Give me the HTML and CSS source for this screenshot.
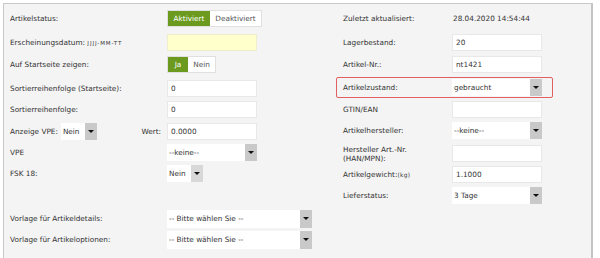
FILE: index.html
```html
<!DOCTYPE html>
<html lang="de">
<head>
    <meta charset="UTF-8">
    <title>Artikel bearbeiten</title>
    <link rel="stylesheet" href="styles.css">
</head>
<body>

<div class="panel">
    <div class="col-left">
        <div class="row">
            <span class="label">Artikelstatus:</span>
            <div class="toggle">
                <span class="tg on w42">Aktiviert</span><span class="tg w52">Deaktiviert</span>
            </div>
        </div>
        <div class="row mt7">
            <span class="label">Erscheinungsdatum: <small class="hint">JJJJ-MM-TT</small></span>
            <input type="text" class="field date" value="">
        </div>
        <div class="row mt5">
            <span class="label">Auf Startseite zeigen:</span>
            <div class="toggle">
                <span class="tg on w20">Ja</span><span class="tg w28">Nein</span>
            </div>
        </div>
        <div class="row mt7">
            <span class="label">Sortierreihenfolge (Startseite):</span>
            <input type="text" class="field" value="0">
        </div>
        <div class="row">
            <span class="label">Sortierreihenfolge:</span>
            <input type="text" class="field" value="0">
        </div>
        <div class="row mt5">
            <span class="label vpe">
                Anzeige VPE:
                <span class="select small"><span class="val">Nein</span><span class="arrow"></span></span>
                <span class="wert">Wert:</span>
            </span>
            <input type="text" class="field" value="0.0000">
        </div>
        <div class="row">
            <span class="label">VPE</span>
            <span class="select"><span class="val">--keine--</span><span class="arrow"></span></span>
        </div>
        <div class="row">
            <span class="label">FSK 18:</span>
            <span class="select small light"><span class="val">Nein</span><span class="arrow"></span></span>
        </div>
        <div class="row mt28">
            <span class="label">Vorlage für Artikeldetails:</span>
            <span class="select wide"><span class="val">-- Bitte wählen Sie --</span><span class="arrow"></span></span>
        </div>
        <div class="row">
            <span class="label">Vorlage für Artikeloptionen:</span>
            <span class="select wide"><span class="val">-- Bitte wählen Sie --</span><span class="arrow"></span></span>
        </div>
    </div>

    <div class="col-right">
        <div class="row">
            <span class="label">Zuletzt aktualisiert:</span>
            <span class="value">28.04.2020 14:54:44</span>
        </div>
        <div class="row mt7">
            <span class="label">Lagerbestand:</span>
            <input type="text" class="field" value="20">
        </div>
        <div class="row mt5">
            <span class="label">Artikel-Nr.:</span>
            <input type="text" class="field" value="nt1421">
        </div>
        <div class="row marked">
            <span class="label">Artikelzustand:</span>
            <span class="select"><span class="val">gebraucht</span><span class="arrow"></span></span>
        </div>
        <div class="row mt3">
            <span class="label">GTIN/EAN</span>
            <input type="text" class="field" value="">
        </div>
        <div class="row">
            <span class="label">Artikelhersteller:</span>
            <span class="select"><span class="val">--keine--</span><span class="arrow"></span></span>
        </div>
        <div class="row mt6">
            <span class="label two">Hersteller Art.-Nr.<br>(HAN/MPN):</span>
            <input type="text" class="field" value="">
        </div>
        <div class="row">
            <span class="label">Artikelgewicht:<small class="unit">(kg)</small></span>
            <input type="text" class="field" value="1.1000">
        </div>
        <div class="row">
            <span class="label">Lieferstatus:</span>
            <span class="select"><span class="val">3 Tage</span><span class="arrow"></span></span>
        </div>
    </div>
</div>

</body>
</html>
```

FILE: styles.css
```css
body {
    margin: 0;
    background-color: #fff;
    font-family: "DejaVu Sans", Verdana, sans-serif;
    font-size: 7.3px;
    color: #333;
}
.panel {
    display: flex;
    margin: 3px 0 0 3px;
    width: 590px;
    height: 260px;
    padding: 6px 0 0 6px;
    box-sizing: border-box;
    background-color: #f4f4f4;
    border: 1px solid #c8c8c8;
    border-right: 2px solid #c4c4c4;
    border-bottom: none;
}
.col-left {
    width: 326px;
}
.col-right {
    width: 217px;
}
.row {
    display: flex;
    align-items: center;
    height: 17px;
    margin-top: 4px;
}
.row:first-child {
    margin-top: 0;
}
.mt3 { margin-top: 3px; }
.mt5 { margin-top: 5px; }
.mt6 { margin-top: 6px; }
.mt7 { margin-top: 7px; }
.mt28 { margin-top: 28px; }

.col-left .label {
    width: 157px;
    flex-shrink: 0;
}
.col-right .row {
    padding-left: 7px;
}
.col-right .label {
    width: 109px;
    flex-shrink: 0;
}
.label.two {
    line-height: 9px;
}
.hint {
    font-size: 5.5px;
    letter-spacing: 0.9px;
}
.unit {
    font-size: 5.8px;
    letter-spacing: 0.3px;
}
.value {
    padding-left: 1px;
}
.vpe {
    display: flex;
    align-items: center;
    gap: 3px;
    padding-right: 6px;
    box-sizing: border-box;
}
.wert {
    margin-left: auto;
}

.row.marked {
    height: 17px;
    margin-top: 4px;
    padding: 1px 10px 1px 6px;
    border: 1px solid #e06060;
    border-radius: 2px;
}

.field {
    width: 90px;
    height: 17px;
    box-sizing: border-box;
    margin: 0;
    padding: 0 3px;
    border: 1px solid #e8e8e8;
    background-color: #fff;
    font-family: inherit;
    font-size: inherit;
    color: #333;
    outline: none;
}
.field.date {
    background-color: #ffffcc;
    border-color: #eeeecc;
}

.toggle {
    display: flex;
    height: 17px;
    border: 1px solid #e0e0e0;
    box-sizing: border-box;
    background-color: #fff;
}
.tg {
    display: flex;
    align-items: center;
    justify-content: center;
    color: #555;
}
.tg.on {
    background-color: #6b9a1f;
    color: #fff;
}
.w20 { width: 20px; }
.w28 { width: 27px; }
.w42 { width: 42px; }
.w52 { width: 51px; }

.select {
    display: flex;
    width: 90px;
    height: 17px;
    box-sizing: border-box;
    background-color: #fff;
}
.select .val {
    flex: 1;
    display: flex;
    align-items: center;
    padding-left: 2px;
    overflow: hidden;
    white-space: nowrap;
}
.select .arrow {
    width: 12px;
    display: flex;
    align-items: center;
    justify-content: center;
    background-color: #c9c9c9;
}
.select .arrow::after {
    content: "";
    border-left: 3px solid transparent;
    border-right: 3px solid transparent;
    border-top: 3px solid #111;
}
.select.small {
    width: 36px;
}
.select.light .arrow {
    background-color: #d8d8d8;
}
.select.wide {
    width: 145px;
    height: 18px;
}
```
